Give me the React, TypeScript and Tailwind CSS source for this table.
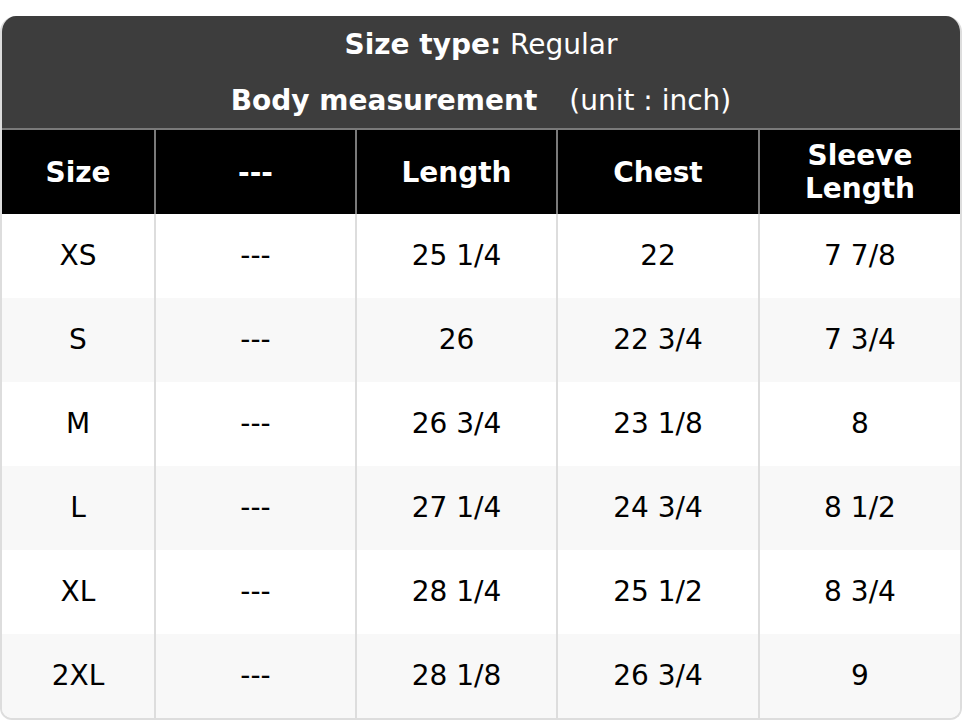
const rows = [
  ["XS", "---", "25 1/4", "22", "7 7/8"],
  ["S", "---", "26", "22 3/4", "7 3/4"],
  ["M", "---", "26 3/4", "23 1/8", "8"],
  ["L", "---", "27 1/4", "24 3/4", "8 1/2"],
  ["XL", "---", "28 1/4", "25 1/2", "8 3/4"],
  ["2XL", "---", "28 1/8", "26 3/4", "9"],
];

const cols = "grid grid-cols-[152px_201px_201px_202px_202px]";

export default function App() {
  return (
    <div className="bg-white pt-4 font-['DejaVu_Sans',sans-serif]">
      <div className="overflow-hidden rounded-t-2xl rounded-b-[12px] border-2 border-t-0 border-[#dddddd]">
        <div className="-mx-[2px] flex flex-col items-center bg-[#3d3d3d] pt-[11px] pb-[9px] text-[28px] text-white">
          <div className="leading-[36px]">
            <span className="font-bold">Size type:</span> Regular
          </div>
          <div className="mt-[20px] leading-[36px]">
            <span className="font-bold">Body measurement</span>
            <span className="ml-8">(unit : inch)</span>
          </div>
        </div>
        <div className={`${cols} border-t-2 border-[#7a7a7a] bg-black text-[28px] font-bold leading-[33px] text-white`}>
          {["Size", "---", "Length", "Chest", "Sleeve Length"].map((h, i) => (
            <div
              key={h}
              className={`flex h-[84px] items-center justify-center text-center ${i > 0 ? "border-l-2 border-[#7a7a7a]" : ""}`}
            >
              {h === "Sleeve Length" ? (
                <span>
                  Sleeve
                  <br />
                  Length
                </span>
              ) : (
                h
              )}
            </div>
          ))}
        </div>
        {rows.map((r, ri) => (
          <div key={ri} className={`${cols} text-[28px] text-black ${ri % 2 ? "bg-[#f8f8f8]" : "bg-white"}`}>
            {r.map((c, ci) => (
              <div
                key={ci}
                className={`flex h-[84px] items-center justify-center ${ci > 0 ? "border-l-2 border-[#dddddd]" : ""}`}
              >
                {c}
              </div>
            ))}
          </div>
        ))}
      </div>
    </div>
  );
}
